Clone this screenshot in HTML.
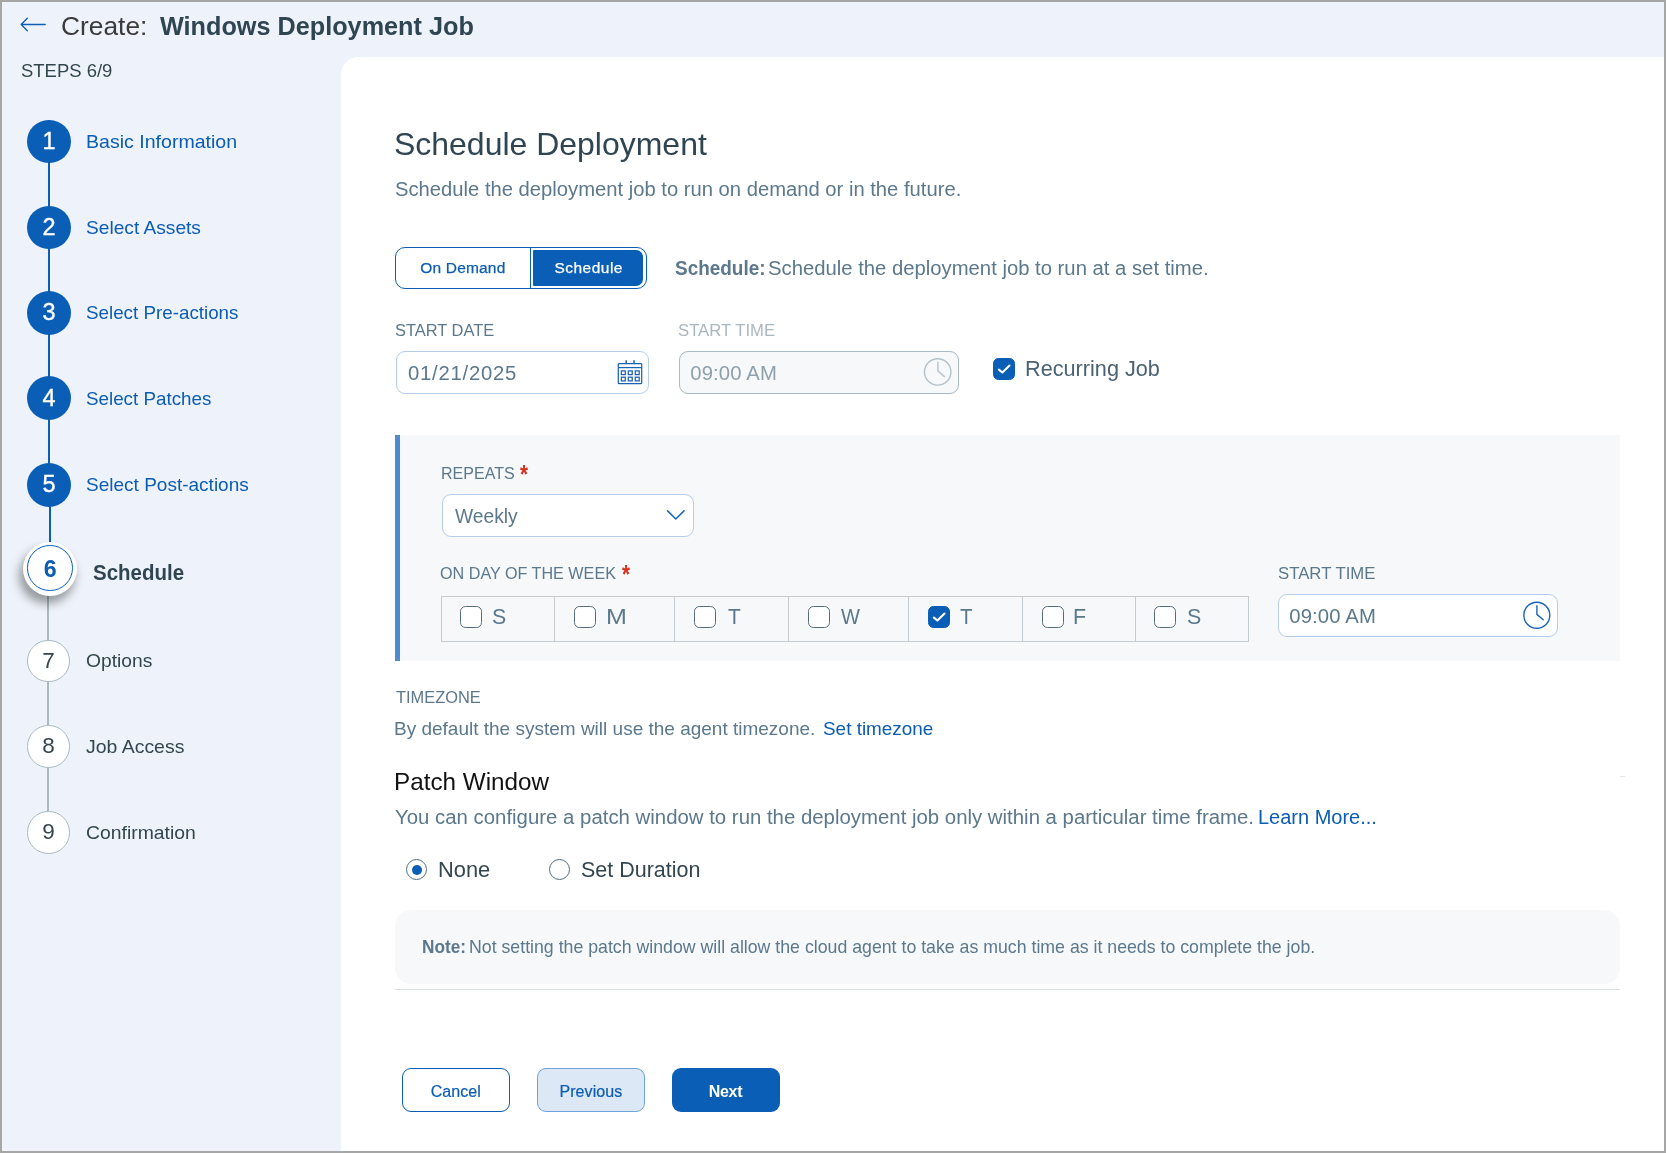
<!DOCTYPE html>
<html lang="en">
<head>
<meta charset="utf-8">
<title>Create: Windows Deployment Job</title>
<style>
*{box-sizing:border-box;margin:0;padding:0}
html,body{width:1666px;height:1153px;overflow:hidden}
body{font-family:"Liberation Sans",Arial,sans-serif;background:#eef3fb;color:#5b7686;position:relative}
.frame{position:absolute;left:0;top:0;width:1666px;height:1153px;border:2px solid #a6a6a6;z-index:50;pointer-events:none}
.a,.t{position:absolute;white-space:nowrap;line-height:1;transform-origin:0 50%}
.panel{position:absolute;left:340.75px;top:56.75px;width:1326px;height:1100px;background:#fff;border-top-left-radius:17.5px}
.line{position:absolute;width:2px;background:#0b5eb5;left:48px}
.line.g{background:#a9b9c1;left:47.25px;width:1.5px}
.dot{position:absolute;width:43.8px;height:43.8px;border-radius:50%;background:#0b5eb5;left:27.1px}
.dot.o{background:#fff;border:1px solid #a9bac2;width:42.5px;height:42.5px;left:27px}
.num{position:absolute;width:44px;left:27px;text-align:center;font-size:23.5px;line-height:1;color:#fff;-webkit-text-stroke:.35px #fff}
.num.o{color:#33464f;-webkit-text-stroke:0;font-size:22.5px;left:26.4px}
.inp{position:absolute;border:1px solid #b5cdea;border-radius:9px;background:#fff}
.cb{position:absolute;width:22px;height:22px;border:1.5px solid #536d7c;border-radius:5.5px;background:#fff}
.cb.on{background:#0b5eb5;border-color:#0b5eb5}
.cell{position:absolute;top:596.25px;height:45.5px;border:1px solid #c5ccd1;border-left:none}
.btn{position:absolute;top:1068px;height:44px;width:108px;border-radius:9px}
</style>
</head>
<body>
<div class="panel"></div>

<!-- header back arrow -->
<svg class="a" style="left:19px;top:15px" width="30" height="20" viewBox="0 0 30 20"><path d="M26.2 9.5H2.4M8.3 3.3L2.2 9.5L8.3 15.7" fill="none" stroke="#0b5eb5" stroke-width="1.3" stroke-linecap="round" stroke-linejoin="round"/></svg>

<!-- stepper -->
<div class="line" style="top:141px;height:344px"></div>
<div class="line" style="top:484px;height:62px;left:49px"></div>
<div class="line g" style="top:596px;height:236px"></div>
<div class="dot" style="top:119.5px"></div>
<div class="dot" style="top:205.5px"></div>
<div class="dot" style="top:290.75px"></div>
<div class="dot" style="top:376.25px"></div>
<div class="dot" style="top:462.75px"></div>
<div class="a" style="left:23px;top:542px;width:54px;height:54px;border-radius:50%;background:#fff;box-shadow:-3px 7px 10px 1px rgba(0,0,0,.36)"></div>
<div class="a" style="left:27.1px;top:545.3px;width:45.6px;height:45.6px;border-radius:50%;border:1px solid #0b5eb5;background:#fff"></div>
<div class="dot o" style="top:639.75px"></div>
<div class="dot o" style="top:725.25px"></div>
<div class="dot o" style="top:811px"></div>

<!-- toggle -->
<div class="a" style="left:395px;top:247px;width:252px;height:42px;border:1.25px solid #0b5eb5;border-radius:10px;background:#fff"></div>
<div class="a" style="left:530px;top:247px;width:1.25px;height:42px;background:#0b5eb5"></div>
<div class="a" style="left:533px;top:250.25px;width:110px;height:36px;background:#0b5eb5;border-radius:1px 7px 7px 1px"></div>

<!-- start date / time -->
<div class="inp" style="left:396px;top:351px;width:253px;height:43px"></div>
<svg class="a" style="left:616px;top:359px" width="28" height="27" viewBox="0 0 28 27"><g fill="none" stroke="#1b63b8" stroke-width="1.25"><rect x="2.3" y="4.5" width="23.4" height="20.2" rx="0.8"/><path d="M2.3 8.6H25.7"/><path stroke-width="1.5" d="M10.2 1.2V4.5M18 1.2V4.5"/><rect x="5.4" y="11.9" width="3.9" height="3.7"/><rect x="12.3" y="11.9" width="3.9" height="3.7"/><rect x="19.3" y="11.9" width="3.9" height="3.7"/><rect x="5.4" y="18.2" width="3.9" height="3.7"/><rect x="12.3" y="18.2" width="3.9" height="3.7"/><rect x="19.3" y="18.2" width="3.9" height="3.7"/></g></svg>
<div class="inp" style="left:679px;top:351px;width:280px;height:43px;background:#f6f8fa;border-color:#a9bac4"></div>
<svg class="a" style="left:922px;top:356px" width="32" height="32" viewBox="0 0 32 32"><g fill="none" stroke="#b3c2ca" stroke-width="1.4" stroke-linecap="round"><circle cx="15.7" cy="15.9" r="13.2"/><path d="M15.9 6.2V15L22.4 20.6"/></g></svg>
<div class="cb on" style="left:993px;top:357.5px"></div>
<svg class="a" style="left:993px;top:357.5px" width="22" height="22" viewBox="0 0 22 22"><path d="M5.9 11.6L9.4 14.5L16.5 7.5" fill="none" stroke="#fff" stroke-width="2.1" stroke-linecap="round" stroke-linejoin="round"/></svg>

<!-- recurring panel -->
<div class="a" style="left:395px;top:435px;width:1225px;height:226px;background:#f6f8fa;border-left:5px solid #4d8bd0"></div>
<div class="inp" style="left:442px;top:494px;width:252px;height:43px"></div>
<svg class="a" style="left:665px;top:508px" width="22" height="14" viewBox="0 0 22 14"><path d="M2.6 2.9L10.8 11L19 2.9" fill="none" stroke="#1565c0" stroke-width="1.5" stroke-linecap="round" stroke-linejoin="round"/></svg>
<div class="cell" style="left:441.25px;width:113.75px;border-left:1px solid #c5ccd1"></div>
<div class="cell" style="left:555px;width:120px"></div>
<div class="cell" style="left:675px;width:114px"></div>
<div class="cell" style="left:789px;width:120.25px"></div>
<div class="cell" style="left:909.25px;width:113.75px"></div>
<div class="cell" style="left:1023px;width:113.25px"></div>
<div class="cell" style="left:1136.25px;width:113px"></div>
<div class="cb" style="left:460px;top:606px"></div>
<div class="cb" style="left:574.25px;top:606px"></div>
<div class="cb" style="left:694.25px;top:606px"></div>
<div class="cb" style="left:807.75px;top:606px"></div>
<div class="cb on" style="left:927.75px;top:606px"></div>
<svg class="a" style="left:927.75px;top:606px" width="22" height="22" viewBox="0 0 22 22"><path d="M5.9 11.6L9.4 14.5L16.5 7.5" fill="none" stroke="#fff" stroke-width="2.1" stroke-linecap="round" stroke-linejoin="round"/></svg>
<div class="cb" style="left:1041.75px;top:606px"></div>
<div class="cb" style="left:1154.25px;top:606px"></div>
<div class="inp" style="left:1278px;top:594.25px;width:280px;height:42.75px"></div>
<svg class="a" style="left:1521px;top:599px" width="32" height="32" viewBox="0 0 32 32"><g fill="none" stroke="#1b63b8" stroke-width="1.4" stroke-linecap="round"><circle cx="15.8" cy="16.2" r="13"/><path d="M15.9 6.8V15.4L22.2 20.8"/></g></svg>

<!-- radios -->
<div class="a" style="left:406.25px;top:859.25px;width:21px;height:21px;border:1.25px solid #536d7c;border-radius:50%;background:#fff"></div>
<div class="a" style="left:411.5px;top:864.5px;width:10.5px;height:10.5px;border-radius:50%;background:#0b5eb5"></div>
<div class="a" style="left:549.25px;top:859.25px;width:21px;height:21px;border:1.25px solid #536d7c;border-radius:50%;background:#fff"></div>

<!-- note -->
<div class="a" style="left:395px;top:910px;width:1225px;height:74px;background:#f6f8fa;border-radius:16px"></div>
<div class="a" style="left:395px;top:988.6px;width:1225px;height:1.2px;background:#dbe2e7"></div>

<div class="a" style="left:1620px;top:776px;width:5px;height:1px;background:#e2e7eb"></div>

<!-- buttons -->
<div class="btn" style="left:402px;border:1.25px solid #0b5eb5;background:#fff"></div>
<div class="btn" style="left:537px;border:1px solid #6ea3dd;background:#dce8f6"></div>
<div class="btn" style="left:672px;background:#0b5eb5"></div>

<div id="tl" style="position:absolute;left:0;top:0;width:1666px;height:1153px;will-change:transform">
<div class="num" style="top:129.85px">1</div>
<div class="num" style="top:215.85px">2</div>
<div class="num" style="top:301.1px">3</div>
<div class="num" style="top:386.6px">4</div>
<div class="num" style="top:473.1px">5</div>
<div class="num" style="top:557.9px;left:28.3px;color:#0b5eb5;font-weight:bold;font-size:23.2px;-webkit-text-stroke:0">6</div>
<div class="num o" style="top:649.6px">7</div>
<div class="num o" style="top:735.1px">8</div>
<div class="num o" style="top:820.8px">9</div>
<div class="t" id="hCreate" style="left:60.50px;top:13.00px;font-size:26.2px;color:#3b3b3b;letter-spacing:0.000px;transform:scaleX(1.0053)">Create:</div>
<div class="t" id="hTitle" style="left:159.50px;top:13.00px;font-size:26px;color:#2f4552;letter-spacing:0.000px;font-weight:bold;transform:scaleX(0.9705)">Windows Deployment Job</div>
<div class="t" id="steps" style="left:21.45px;top:62.00px;font-size:18.75px;color:#33464f;letter-spacing:0.000px;transform:scaleX(0.9848)">STEPS 6/9</div>
<div class="t" id="s1" style="left:86.40px;top:132.00px;font-size:19px;color:#0b5cb5;letter-spacing:0.000px;transform:scaleX(1.0293)">Basic Information</div>
<div class="t" id="s2" style="left:86.10px;top:218.00px;font-size:19px;color:#0b5cb5;letter-spacing:0.000px;transform:scaleX(1.0077)">Select Assets</div>
<div class="t" id="s3" style="left:86.10px;top:303.00px;font-size:19px;color:#0b5cb5;letter-spacing:0.000px;transform:scaleX(0.9888)">Select Pre-actions</div>
<div class="t" id="s4" style="left:86.10px;top:389.00px;font-size:19px;color:#0b5cb5;letter-spacing:0.000px;transform:scaleX(0.9894)">Select Patches</div>
<div class="t" id="s5" style="left:86.10px;top:475.00px;font-size:19px;color:#0b5cb5;letter-spacing:0.000px;transform:scaleX(1.0009)">Select Post-actions</div>
<div class="t" id="s6" style="left:92.79px;top:563.00px;font-size:21.5px;color:#2f4552;letter-spacing:0.000px;font-weight:bold;transform:scaleX(0.9524)">Schedule</div>
<div class="t" id="s7" style="left:85.85px;top:651.00px;font-size:19px;color:#33464f;letter-spacing:0.000px;transform:scaleX(1.0122)">Options</div>
<div class="t" id="s8" style="left:86.40px;top:737.00px;font-size:19px;color:#33464f;letter-spacing:0.000px;transform:scaleX(1.0238)">Job Access</div>
<div class="t" id="s9" style="left:85.80px;top:823.00px;font-size:19px;color:#33464f;letter-spacing:0.000px;transform:scaleX(1.0188)">Confirmation</div>
<div class="t" id="h1" style="left:393.52px;top:128.00px;font-size:32px;color:#2f4552;letter-spacing:0.000px;transform:scaleX(0.9991)">Schedule Deployment</div>
<div class="t" id="sub" style="left:394.64px;top:179.00px;font-size:20px;color:#5b788c;letter-spacing:0.000px;transform:scaleX(1.0105)">Schedule the deployment job to run on demand or in the future.</div>
<div class="t" id="tg1" style="left:420.26px;top:260.00px;font-size:15.5px;color:#0b5cb5;letter-spacing:0.183px;-webkit-text-stroke:0.25px #0b5cb5">On Demand</div>
<div class="t" id="tg2" style="left:554.42px;top:260.00px;font-size:15.5px;color:#ffffff;letter-spacing:0.485px;-webkit-text-stroke:0.25px #ffffff">Schedule</div>
<div class="t" id="sch1" style="left:674.55px;top:258.00px;font-size:20px;color:#5b788c;letter-spacing:0.000px;font-weight:bold;transform:scaleX(0.9476)">Schedule:</div>
<div class="t" id="sch2" style="left:768.14px;top:258.00px;font-size:20px;color:#5b788c;letter-spacing:0.000px;transform:scaleX(1.0135)">Schedule the deployment job to run at a set time.</div>
<div class="t" id="lsd" style="left:395.40px;top:322.00px;font-size:17.2px;color:#5b788c;letter-spacing:0.000px;transform:scaleX(0.9556)">START DATE</div>
<div class="t" id="lst" style="left:678.16px;top:322.00px;font-size:17.2px;color:#a9b8c0;letter-spacing:0.000px;transform:scaleX(0.9721)">START TIME</div>
<div class="t" id="vdate" style="left:407.96px;top:363.00px;font-size:20.3px;color:#5b788c;letter-spacing:0.759px">01/21/2025</div>
<div class="t" id="vtime" style="left:690.25px;top:363.00px;font-size:20.3px;color:#8da0ab;letter-spacing:0.141px">09:00 AM</div>
<div class="t" id="rec" style="left:1025.03px;top:359.00px;font-size:21.5px;color:#4a6272;letter-spacing:0.000px;transform:scaleX(1.0080)">Recurring Job</div>
<div class="t" id="lrep" style="left:441.25px;top:465.00px;font-size:17.2px;color:#5b788c;letter-spacing:0.000px;transform:scaleX(0.9327)">REPEATS</div>
<div class="t" id="lrepa" style="left:520.49px;top:462.00px;font-size:25px;color:#d9301a;letter-spacing:0.000px;font-weight:bold;transform:scaleX(0.8216)">*</div>
<div class="t" id="vweek" style="left:454.50px;top:506.00px;font-size:20px;color:#5b788c;letter-spacing:0.000px;transform:scaleX(0.9623)">Weekly</div>
<div class="t" id="ldow" style="left:440.09px;top:565.00px;font-size:17.2px;color:#5b788c;letter-spacing:0.000px;transform:scaleX(0.9399)">ON DAY OF THE WEEK</div>
<div class="t" id="ldowa" style="left:622.10px;top:562.00px;font-size:25px;color:#d9301a;letter-spacing:0.000px;font-weight:bold;transform:scaleX(0.8212)">*</div>
<div class="t" id="d1" style="left:491.78px;top:606.00px;font-size:22px;color:#5b788c;letter-spacing:0.000px;transform:scaleX(0.9712)">S</div>
<div class="t" id="d2" style="left:605.61px;top:606.00px;font-size:22px;color:#5b788c;letter-spacing:0.000px;transform:scaleX(1.1395)">M</div>
<div class="t" id="d3" style="left:727.60px;top:606.00px;font-size:22px;color:#5b788c;letter-spacing:0.000px;transform:scaleX(0.9460)">T</div>
<div class="t" id="d4" style="left:840.86px;top:606.00px;font-size:22px;color:#5b788c;letter-spacing:0.000px;transform:scaleX(0.9120)">W</div>
<div class="t" id="d5" style="left:960.45px;top:606.00px;font-size:22px;color:#5b788c;letter-spacing:0.000px;transform:scaleX(0.9293)">T</div>
<div class="t" id="d6" style="left:1073.46px;top:606.00px;font-size:22px;color:#5b788c;letter-spacing:0.000px;transform:scaleX(0.9736)">F</div>
<div class="t" id="d7" style="left:1186.85px;top:606.00px;font-size:22px;color:#5b788c;letter-spacing:0.000px;transform:scaleX(0.9755)">S</div>
<div class="t" id="lst2" style="left:1277.64px;top:565.00px;font-size:17.2px;color:#5b788c;letter-spacing:0.000px;transform:scaleX(0.9747)">START TIME</div>
<div class="t" id="vtime2" style="left:1289.24px;top:606.00px;font-size:20.3px;color:#5b788c;letter-spacing:0.129px">09:00 AM</div>
<div class="t" id="ltz" style="left:395.50px;top:689.00px;font-size:17.2px;color:#5b788c;letter-spacing:0.000px;transform:scaleX(0.9551)">TIMEZONE</div>
<div class="t" id="tz1" style="left:394.42px;top:719.00px;font-size:19px;color:#5b788c;letter-spacing:0.000px;transform:scaleX(0.9999)">By default the system will use the agent timezone.</div>
<div class="t" id="tz2" style="left:823.35px;top:719.00px;font-size:19px;color:#0b5cb5;letter-spacing:0.000px;transform:scaleX(0.9954)">Set timezone</div>
<div class="t" id="pw" style="left:393.94px;top:770.00px;font-size:24.2px;color:#111111;letter-spacing:0.000px;transform:scaleX(1.0030)">Patch Window</div>
<div class="t" id="pw1" style="left:394.79px;top:807.00px;font-size:20px;color:#5b788c;letter-spacing:0.000px;transform:scaleX(1.0189)">You can configure a patch window to run the deployment job only within a particular time frame.</div>
<div class="t" id="pw2" style="left:1258.15px;top:807.00px;font-size:20px;color:#0b5cb5;letter-spacing:0.000px;transform:scaleX(0.9988)">Learn More...</div>
<div class="t" id="r1" style="left:437.56px;top:859.00px;font-size:21.75px;color:#33464f;letter-spacing:0.000px;transform:scaleX(1.0028)">None</div>
<div class="t" id="r2" style="left:581.00px;top:859.00px;font-size:21.75px;color:#33464f;letter-spacing:0.000px;transform:scaleX(0.9882)">Set Duration</div>
<div class="t" id="n1" style="left:421.50px;top:939.00px;font-size:17.75px;color:#5b788c;letter-spacing:0.000px;font-weight:bold;transform:scaleX(0.9694)">Note:</div>
<div class="t" id="n2" style="left:468.50px;top:939.00px;font-size:17.75px;color:#5b788c;letter-spacing:0.000px;transform:scaleX(0.9984)">Not setting the patch window will allow the cloud agent to take as much time as it needs to complete the job.</div>
<div class="t" id="b1" style="left:430.73px;top:1084.00px;font-size:16px;color:#0b5cb5;letter-spacing:0.076px;-webkit-text-stroke:0.2px #0b5cb5">Cancel</div>
<div class="t" id="b2" style="left:559.51px;top:1084.00px;font-size:16px;color:#0b5cb5;letter-spacing:0.059px;-webkit-text-stroke:0.2px #0b5cb5">Previous</div>
<div class="t" id="b3" style="left:708.79px;top:1084.00px;font-size:16px;color:#ffffff;letter-spacing:-0.308px;font-weight:bold">Next</div>
</div>

<div class="frame"></div>
</body>
</html>
